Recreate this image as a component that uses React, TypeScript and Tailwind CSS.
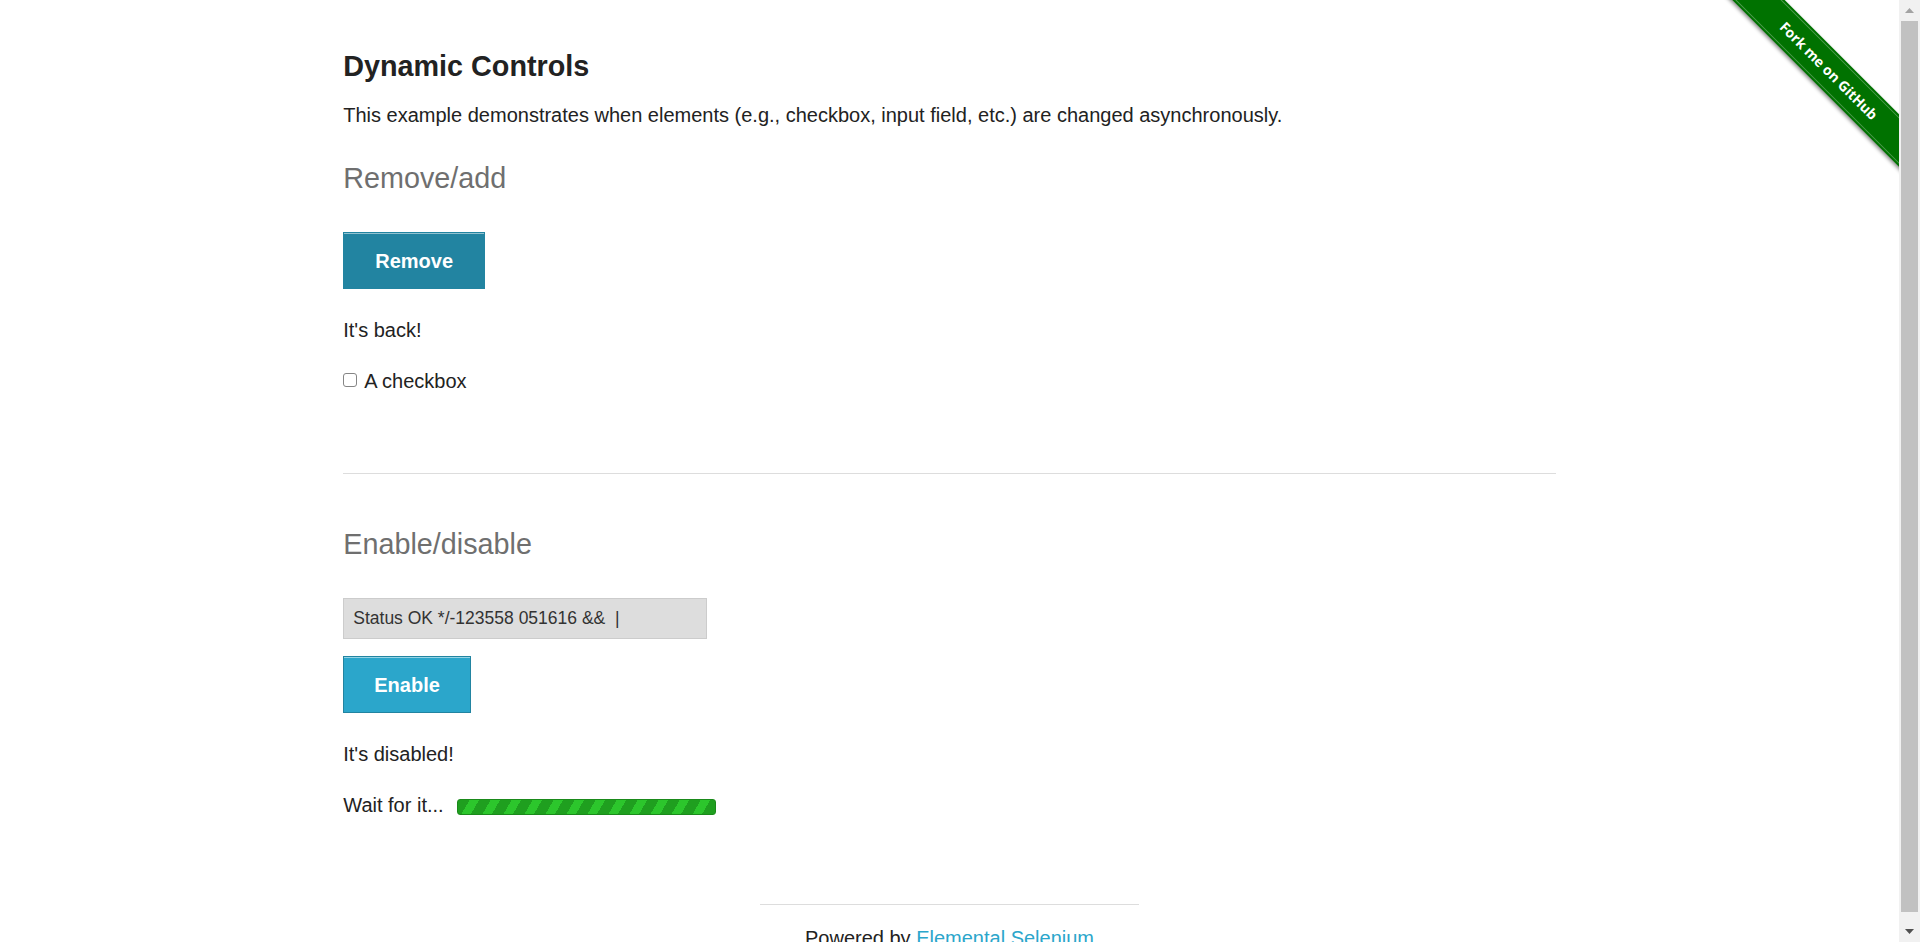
const FONT = "font-['Liberation_Sans',Arial,sans-serif]";

function ForkRibbon() {
  return (
    <div className="pointer-events-none absolute top-0 right-0 h-[186px] w-[186px] overflow-hidden">
      <div className="absolute top-[52px] left-[-24px] h-[37px] w-[280px] rotate-45 bg-[#007200] py-[2px] shadow-[0_2px_4px_rgba(0,0,0,0.45)]">
        <div className="flex h-full items-center justify-center border-y border-white/30">
          <span className="font-['Open_Sans','Noto_Sans',sans-serif] text-[14px] font-bold text-white">
            Fork me on GitHub
          </span>
        </div>
      </div>
    </div>
  );
}

function Scrollbar() {
  return (
    <div className="flex w-[21px] shrink-0 flex-col bg-[#f1f1f1]">
      <div className="flex h-[21px] items-center justify-center">
        <svg width="9" height="5" viewBox="0 0 9 5">
          <path d="M0 5 L4.5 0 L9 5 Z" fill="#a3a3a3" />
        </svg>
      </div>
      <div className="mx-[2px] mb-[9px] flex-1 bg-[#c1c1c1]" />
      <div className="flex h-[21px] items-center justify-center">
        <svg width="9" height="5" viewBox="0 0 9 5">
          <path d="M0 0 L4.5 5 L9 0 Z" fill="#505050" />
        </svg>
      </div>
    </div>
  );
}

export default function App() {
  return (
    <div className={`flex h-[942px] overflow-hidden bg-white text-[#222222] ${FONT}`}>
      <main className="relative flex-1 overflow-hidden">
        <ForkRibbon />

        <div className="mx-auto flex w-[1250px] flex-col px-[18.75px] pt-[49px]">
          <h3 className="text-[28.75px] leading-[34px] font-bold">Dynamic Controls</h3>
          <p className="mt-[20px] text-[20px] leading-[24px]">
            This example demonstrates when elements (e.g., checkbox, input field, etc.) are changed
            asynchronously.
          </p>

          <h4 className="mt-[34px] text-[28.75px] leading-[34px] text-[#6f6f6f]">Remove/add</h4>
          <div className="mt-[37px]">
            <button className="h-[57px] border border-[#2284a1] bg-[#2284a1] px-[31px] text-[20px] leading-[24px] font-bold text-white shadow-[inset_0_1px_0_rgba(255,255,255,0.5)]">
              Remove
            </button>
          </div>
          <p className="mt-[29px] text-[20px] leading-[24px]">It's back!</p>
          <div className="mt-[27px] flex items-start text-[20px] leading-[24px]">
            <span className="mt-[4px] h-[14px] w-[14px] rounded-[3px] border border-[#858585] bg-white" />
            <span className="ml-[7px]">A checkbox</span>
          </div>

          <hr className="mt-[80px] border-t border-[#dddddd]" />

          <h4 className="mt-[53px] text-[28.75px] leading-[34px] text-[#6f6f6f]">Enable/disable</h4>
          <input
            disabled
            type="text"
            value="Status OK */-123558 051616 &&  |"
            readOnly
            className="mt-[37px] h-[41px] w-[364px] border border-[#cccccc] bg-[#dddddd] px-[9px] text-[17.5px] text-[#333333]"
          />
          <div className="mt-[17px]">
            <button className="h-[57px] border border-[#2284a1] bg-[#2ba6cb] px-[30px] text-[20px] leading-[24px] font-bold text-white shadow-[inset_0_1px_0_rgba(255,255,255,0.5)]">
              Enable
            </button>
          </div>
          <p className="mt-[29px] text-[20px] leading-[24px]">It's disabled!</p>
          <div className="mt-[27px] flex items-start text-[20px] leading-[24px]">
            <span>Wait for it...</span>
            <div className="mt-[6px] ml-[13px] h-[16px] w-[259px] rounded-[3px] border border-[#1a8a1a] bg-[repeating-linear-gradient(120deg,#1f9f1f_0px,#1f9f1f_10px,#2cc62c_10px,#2cc62c_18.2px)]" />
          </div>
        </div>

        <footer className="mx-auto mt-[87px] flex w-[416.67px] flex-col px-[18.75px]">
          <hr className="border-t border-[#dddddd]" />
          <div className="mt-[21px] text-center text-[20px] leading-[24px]">
            Powered by <a className="text-[#2ba6cb]">Elemental Selenium</a>
          </div>
        </footer>
      </main>
      <Scrollbar />
    </div>
  );
}
